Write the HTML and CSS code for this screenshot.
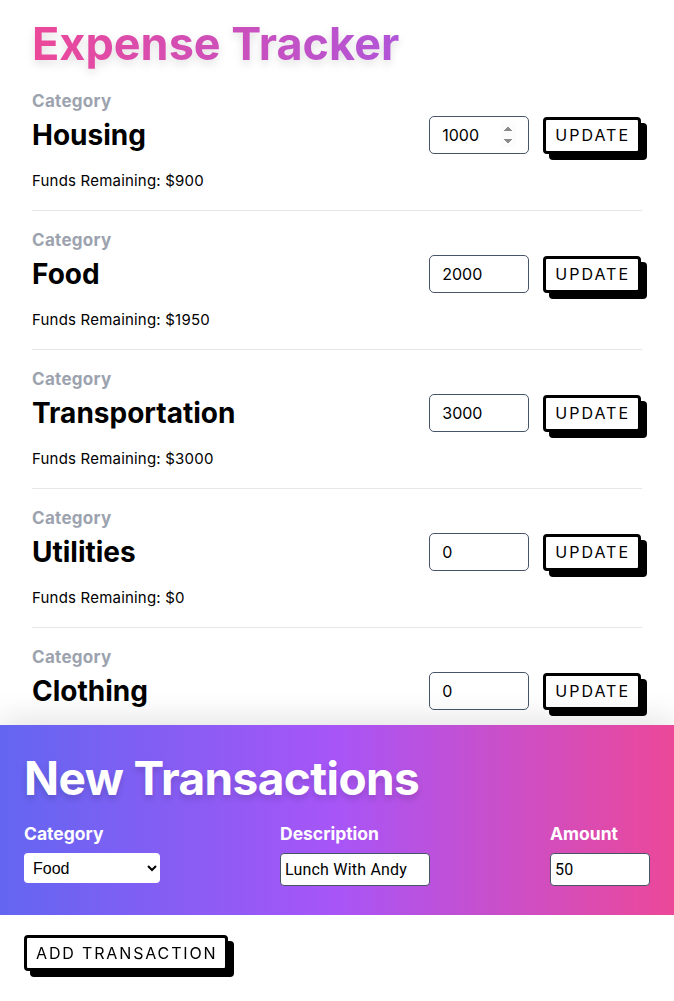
FILE: index.html
```html
<!DOCTYPE html>
<html lang="en">
<head>
<meta charset="utf-8">
<title>Expense Tracker</title>
<link rel="stylesheet" href="styles.css">
</head>
<body>
<main class="page">
  <h1 class="title">Expense Tracker</h1>

  <section class="cat">
    <div class="cat-label">Category</div>
    <div class="cat-line">
      <h2 class="cat-name">Housing</h2>
      <div class="controls">
        <input class="amt" type="number" value="1000">
        <button class="btn">Update</button>
      </div>
    </div>
    <div class="funds">Funds Remaining: $900</div>
  </section>

  <section class="cat">
    <div class="cat-label">Category</div>
    <div class="cat-line">
      <h2 class="cat-name">Food</h2>
      <div class="controls">
        <input class="amt" type="text" value="2000">
        <button class="btn">Update</button>
      </div>
    </div>
    <div class="funds">Funds Remaining: $1950</div>
  </section>

  <section class="cat">
    <div class="cat-label">Category</div>
    <div class="cat-line">
      <h2 class="cat-name">Transportation</h2>
      <div class="controls">
        <input class="amt" type="text" value="3000">
        <button class="btn">Update</button>
      </div>
    </div>
    <div class="funds">Funds Remaining: $3000</div>
  </section>

  <section class="cat">
    <div class="cat-label">Category</div>
    <div class="cat-line">
      <h2 class="cat-name">Utilities</h2>
      <div class="controls">
        <input class="amt" type="text" value="0">
        <button class="btn">Update</button>
      </div>
    </div>
    <div class="funds">Funds Remaining: $0</div>
  </section>

  <section class="cat">
    <div class="cat-label">Category</div>
    <div class="cat-line">
      <h2 class="cat-name">Clothing</h2>
      <div class="controls">
        <input class="amt" type="text" value="0">
        <button class="btn">Update</button>
      </div>
    </div>
    <div class="funds">Funds Remaining: $0</div>
  </section>
</main>

<footer class="footer">
  <div class="panel">
    <h2 class="panel-title">New Transactions</h2>
    <div class="fields">
      <div class="field">
        <label class="field-label">Category</label>
        <select class="sel">
          <option>Food</option>
          <option>Housing</option>
          <option>Transportation</option>
          <option>Utilities</option>
          <option>Clothing</option>
        </select>
      </div>
      <div class="field">
        <label class="field-label">Description</label>
        <input class="txt desc" type="text" value="Lunch With Andy">
      </div>
      <div class="field">
        <label class="field-label">Amount</label>
        <input class="txt amount" type="text" value="50">
      </div>
    </div>
  </div>
  <div class="actions">
    <button class="btn btn-add">Add Transaction</button>
  </div>
</footer>
</body>
</html>
```

FILE: styles.css
```css
* { box-sizing: border-box; }

html, body {
  margin: 0;
  padding: 0;
  background: #fff;
  font-family: Inter, "Noto Sans", sans-serif;
  color: #000;
}

.page {
  padding: 17px 32px 300px;
}

.title {
  display: inline-block;
  margin: 0;
  font-size: 45px;
  line-height: 54px;
  font-weight: 700;
  letter-spacing: 0;
  background: linear-gradient(90deg, #ec4899 0%, #b155d8 100%);
  -webkit-background-clip: text;
  background-clip: text;
  color: transparent;
  filter: drop-shadow(0 4px 4px rgba(0, 0, 0, 0.12));
}

.cat {
  padding: 18px 0 19px;
  border-bottom: 1px solid #e5e7eb;
}

.cat + .cat { padding-top: 17px; }

.cat-label {
  font-size: 17px;
  line-height: 24px;
  font-weight: 700;
  letter-spacing: 0.3px;
  color: #9ca3af;
}

.cat-line {
  display: flex;
  align-items: center;
  justify-content: space-between;
  margin-top: 3px;
}

.cat-name {
  margin: 0;
  font-size: 28px;
  line-height: 36px;
  font-weight: 700;
}

.controls {
  display: flex;
  align-items: center;
  gap: 14px;
  padding-right: 1px;
}

.amt {
  width: 100px;
  height: 38px;
  border: 1px solid #475569;
  border-radius: 5px;
  padding: 0 12px 0 12px;
  font: 400 16px Inter, sans-serif;
  color: #000;
  background: #fff;
}

.amt::-webkit-inner-spin-button {
  opacity: 1;
  height: 24px;
}

.btn {
  height: 37px;
  padding: 0 8px 0 9px;
  border: 3px solid #000;
  border-radius: 4px;
  background: #fff;
  box-shadow: 6px 6px 0 0 #000;
  font: 400 16px Inter, sans-serif;
  letter-spacing: 2px;
  text-transform: uppercase;
  color: #000;
  cursor: pointer;
}

.funds {
  margin-top: 17px;
  font-size: 15px;
  line-height: 20px;
  letter-spacing: 0.2px;
}

.footer {
  position: fixed;
  left: 0;
  right: 0;
  bottom: 0;
  height: 276px;
  background: #fff;
  box-shadow: 0 -8px 28px rgba(0, 0, 0, 0.1);
}

.panel {
  height: 190px;
  padding: 24px 24px 0;
  background: linear-gradient(90deg, #6366f1 0%, #a855f7 50%, #ec4899 100%);
  color: #fff;
}

.panel-title {
  margin: 0;
  font-size: 46px;
  line-height: 58px;
  font-weight: 700;
  letter-spacing: -0.6px;
  text-shadow: 0 4px 6px rgba(0, 0, 0, 0.15);
}

.fields {
  display: flex;
  justify-content: space-between;
  margin-top: 15px;
}

.field {
  display: flex;
  flex-direction: column;
  align-items: flex-start;
}

.field-label {
  font-size: 17.5px;
  line-height: 24px;
  font-weight: 700;
  margin-bottom: 7px;
}

.sel {
  width: 136px;
  height: 30px;
  border: none;
  border-radius: 4px;
  background: #fff;
  padding: 0 4px 0 5px;
  font: 400 16px "Liberation Sans", Arial, sans-serif;
  color: #000;
}

.txt {
  height: 33px;
  border: 1px solid #475569;
  border-radius: 4px;
  background: #fff;
  padding: 0 4px;
  font: 400 16px Roboto, sans-serif;
  letter-spacing: 0.2px;
  color: #000;
}

.desc { width: 150px; }
.amount { width: 100px; }

.actions {
  padding: 20px 24px 0;
}

.btn-add {
  height: 36px;
  padding: 0 8px 0 9px;
  letter-spacing: 1.85px;
  box-shadow: 6px 6px 0 0 #000;
}
```
